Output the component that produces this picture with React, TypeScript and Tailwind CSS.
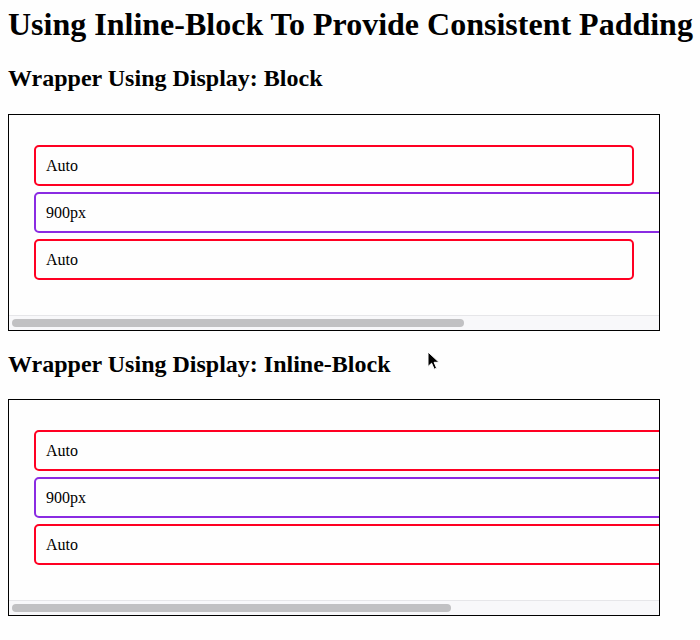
import React from "react";

function Item({ label, wide, purple }: { label: string; wide?: boolean; purple?: boolean }) {
  return (
    <div
      className={
        "h-[41px] shrink-0 border-2 rounded-[5px] pl-[10px] flex items-center text-[16px] " +
        (purple ? "border-[#8a2be2] " : "border-[#ff0022] ") +
        (wide ? "w-[900px]" : "w-[600px]")
      }
    >
      {label}
    </div>
  );
}

function Wrapper({ inline }: { inline?: boolean }) {
  return (
    <div className="ml-[8px] w-[652px] border border-black overflow-hidden bg-[#fefefe]">
      <div className="h-[200px] pt-[30px] pl-[25px] flex flex-col gap-[6px]">
        <Item label="Auto" wide={inline} />
        <Item label="900px" wide purple />
        <Item label="Auto" wide={inline} />
      </div>
      <div className="h-[15px] bg-[#f8f8fa] border-t border-[#e6e6e9] pt-[3px] pl-[3px]">
        <div className={"h-[8px] rounded-full bg-[#c1c1c3] " + (inline ? "w-[439px]" : "w-[452px]")} />
      </div>
    </div>
  );
}

export default function App() {
  return (
    <div className="relative w-[700px] h-[640px] overflow-hidden bg-[#fefefe] text-black font-['Liberation_Serif',serif]">
      <h1 className="mt-[6px] ml-[8px] text-[32px] leading-[37px] font-bold whitespace-nowrap">
        Using Inline-Block To Provide Consistent Padding In A Scrolling Container
      </h1>
      <h2 className="mt-[21px] ml-[8px] text-[24px] leading-[28px] font-bold whitespace-nowrap">
        Wrapper Using Display: Block
      </h2>
      <div className="mt-[22px]">
        <Wrapper />
      </div>
      <h2 className="mt-[19px] ml-[8px] text-[24px] leading-[28px] font-bold whitespace-nowrap">
        Wrapper Using Display: Inline-Block
      </h2>
      <div className="mt-[21px]">
        <Wrapper inline />
      </div>
      <svg
        className="absolute left-[427px] top-[351px]"
        width="14"
        height="20"
        viewBox="0 0 14 20"
      >
        <path
          d="M1 1 L1 15.5 L4.6 12.2 L7.2 18.2 L9.6 17.2 L7.1 11.3 L12 11.3 Z"
          fill="#000"
          stroke="#fff"
          strokeWidth="1"
          strokeLinejoin="round"
        />
      </svg>
    </div>
  );
}
